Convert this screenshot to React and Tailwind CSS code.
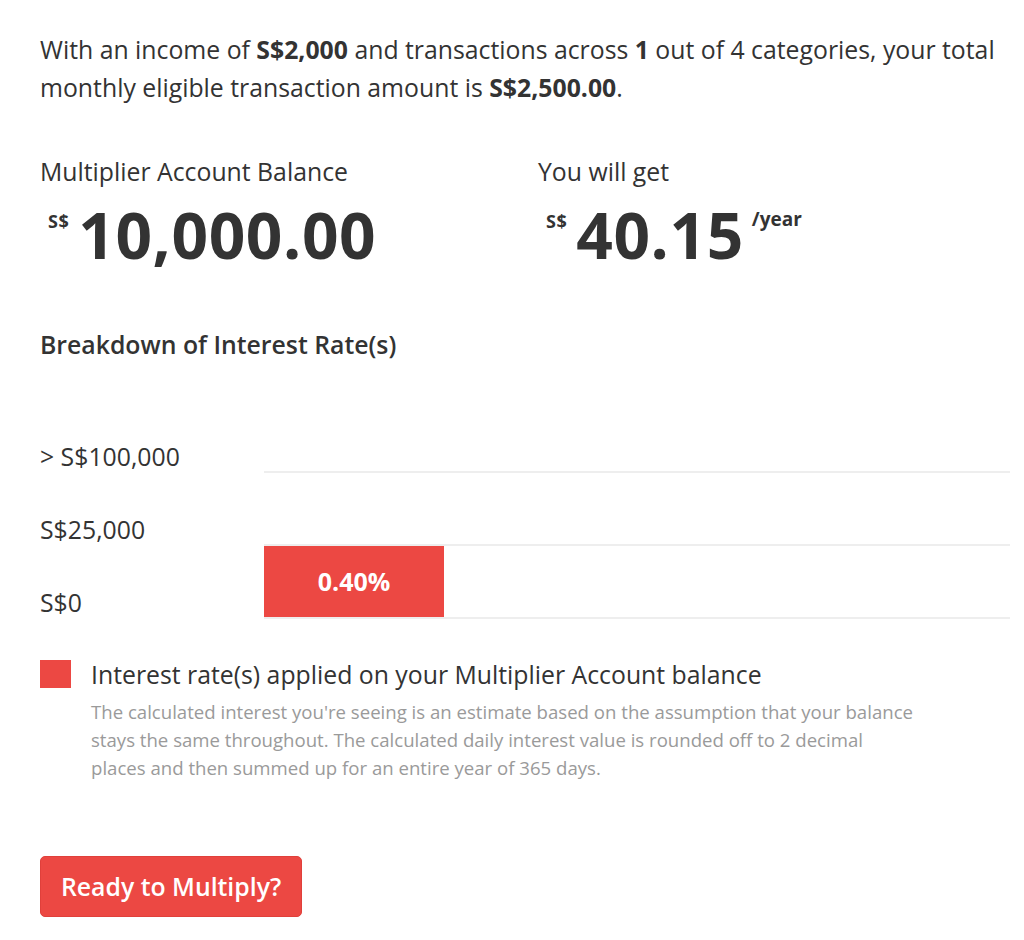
import React from "react";

const RED = "bg-[#ec4843]";

function Amount({ value, suffix }) {
  return (
    <div className="flex items-start mt-[10px]">
      <span className="text-[18px] font-bold leading-none mt-[15px] mr-[9px] ml-[8px] tracking-[0.5px]">S$</span>
      <span className="text-[64px] font-bold leading-[76px] tracking-[0.6px]">{value}</span>
      {suffix && (
        <span className="text-[19px] font-bold leading-none mt-[13px] ml-[8px]">{suffix}</span>
      )}
    </div>
  );
}

function Row({ label, children }) {
  return (
    <div className="flex h-[73px]">
      <div className="w-[224px] flex items-end">
        <span className="text-[24.8px] leading-[30px] mb-[2px]">{label}</span>
      </div>
      <div className="flex-1 flex flex-col justify-end">
        <div className="flex-1 flex">{children}</div>
        <div className="h-[2px] bg-[#eeeeee]" />
      </div>
    </div>
  );
}

export default function App() {
  return (
    <div
      className="w-[1024px] h-[940px] bg-white text-[#333333] px-[40px] pt-[30px]"
      style={{ fontFamily: '"Open Sans", "Liberation Sans", sans-serif' }}
    >
      <p className="text-[24.8px] leading-[38px] w-[968px]">
        With an income of <b className="font-bold">S$2,000</b> and transactions across{" "}
        <b className="font-bold">1</b> out of 4 categories, your total monthly eligible transaction amount is{" "}
        <b className="font-bold">S$2,500.00</b>.
      </p>

      <div className="flex mt-[49px]">
        <div className="w-[498px]">
          <div className="text-[24.8px] leading-[32px]">Multiplier Account Balance</div>
          <Amount value="10,000.00" />
        </div>
        <div>
          <div className="text-[24.8px] leading-[32px]">You will get</div>
          <Amount value="40.15" suffix="/year" />
        </div>
      </div>

      <h3 className="text-[24.8px] font-semibold leading-[32px] mt-[55px]">Breakdown of Interest Rate(s)</h3>

      <div className="mt-[40px] w-[970px]">
        <Row label="> S$100,000" />
        <Row label="S$25,000" />
        <Row label="S$0">
          <div className={`w-[180px] ${RED} flex items-center justify-center text-white font-bold text-[25px]`}>
            0.40%
          </div>
        </Row>
      </div>

      <div className="flex mt-[41px]">
        <div className={`w-[31px] h-[28px] ${RED} shrink-0`} />
        <div className="ml-[20px]">
          <div className="text-[24.8px] leading-[28px]">
            Interest rate(s) applied on your Multiplier Account balance
          </div>
          <p className="text-[18.6px] leading-[28px] text-[#9a9a9a] w-[826px] mt-[10px]">
            The calculated interest you're seeing is an estimate based on the assumption that your balance stays the
            same throughout. The calculated daily interest value is rounded off to 2 decimal places and then summed up
            for an entire year of 365 days.
          </p>
        </div>
      </div>

      <button
        className={`mt-[74px] h-[61px] px-[20px] rounded-[5px] ${RED} border border-[#e0403b] text-white text-[24.8px] font-semibold`}
      >
        Ready to Multiply?
      </button>
    </div>
  );
}
